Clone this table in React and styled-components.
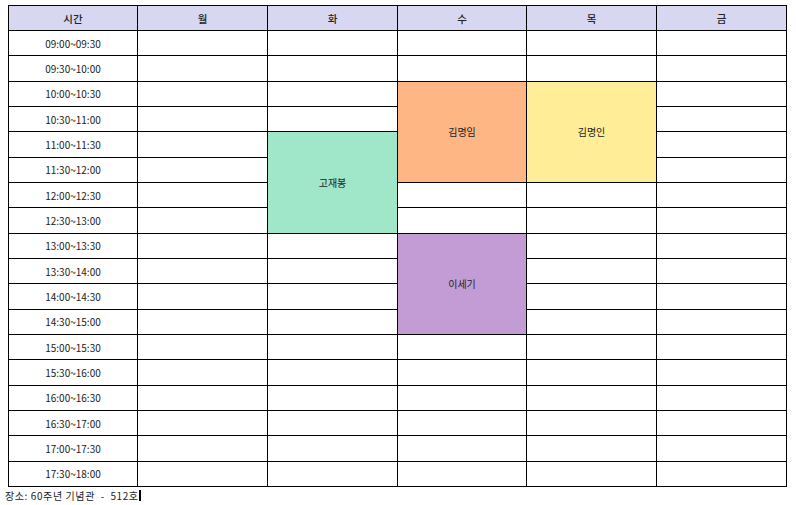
import React from "react";
import styled, { createGlobalStyle } from "styled-components";

const Global = createGlobalStyle`
  html, body { margin: 0; padding: 0; background: #fff; }
  body { font-family: "Noto Sans CJK KR", "Noto Sans", sans-serif; color: #222; }
`;

const Page = styled.div`
  display: flex;
  flex-direction: column;
  padding: 5px 0 0 5px;
`;

const Grid = styled.div`
  box-sizing: border-box;
  margin-left: 3px;
  width: 779px;
  height: 482px;
  display: grid;
  grid-template-columns: 128px 129px 129px 128px 129px 129px;
  grid-template-rows: 24px repeat(18, 1fr);
  gap: 1px;
  background: #000;
  border: 1px solid #000;
`;

const Cell = styled.div`
  display: flex;
  align-items: center;
  justify-content: center;
  background: ${(p) => p.$bg || "#fff"};
  font-size: ${(p) => (p.$head ? "10.5px" : "10px")};
  font-weight: ${(p) => (p.$head ? 500 : 400)};
  color: #222;
  grid-column: ${(p) => p.$col};
  grid-row: ${(p) => p.$row};
  white-space: nowrap;
`;

const Footer = styled.div`
  display: flex;
  align-items: center;
  height: 14px;
  margin-top: 1px;
  font-size: 10px;
  color: #222;
  letter-spacing: 0.6px;
  white-space: pre;
`;

const Caret = styled.span`
  display: inline-block;
  width: 2px;
  height: 11px;
  background: #000;
`;

const days = ["월", "화", "수", "목", "금"];
const times = [];
for (let h = 9; h < 18; h++) {
  const hh = String(h).padStart(2, "0");
  const nh = String(h + 1).padStart(2, "0");
  times.push(`${hh}:00~${hh}:30`);
  times.push(`${hh}:30~${nh}:00`);
}

const blocks = [
  { name: "고재봉", col: 3, start: 4, span: 4, bg: "#a0e6c8" },
  { name: "김명임", col: 4, start: 2, span: 4, bg: "#ffb685" },
  { name: "김명인", col: 5, start: 2, span: 4, bg: "#ffed98" },
  { name: "이세기", col: 4, start: 8, span: 4, bg: "#c39cd6" },
];

function covered(col, idx) {
  return blocks.some((b) => b.col === col && idx >= b.start && idx < b.start + b.span);
}

export default function App() {
  const cells = [];
  cells.push(
    <Cell key="h0" $head $bg="#d7d7f2" $col={1} $row={1}>
      시간
    </Cell>
  );
  days.forEach((d, i) =>
    cells.push(
      <Cell key={"h" + d} $head $bg="#d7d7f2" $col={i + 2} $row={1}>
        {d}
      </Cell>
    )
  );
  times.forEach((t, idx) => {
    cells.push(
      <Cell key={"t" + idx} $col={1} $row={idx + 2}>
        {t}
      </Cell>
    );
    for (let c = 2; c <= 6; c++) {
      if (!covered(c, idx)) {
        cells.push(<Cell key={`c${idx}-${c}`} $col={c} $row={idx + 2} />);
      }
    }
  });
  blocks.forEach((b) =>
    cells.push(
      <Cell
        key={b.name}
        $bg={b.bg}
        $col={b.col}
        $row={`${b.start + 2} / span ${b.span}`}
      >
        {b.name}
      </Cell>
    )
  );

  return (
    <>
      <Global />
      <Page>
        <Grid>{cells}</Grid>
        <Footer>
          {"장소: 60주년 기념관  -  512호"}
          <Caret />
        </Footer>
      </Page>
    </>
  );
}
